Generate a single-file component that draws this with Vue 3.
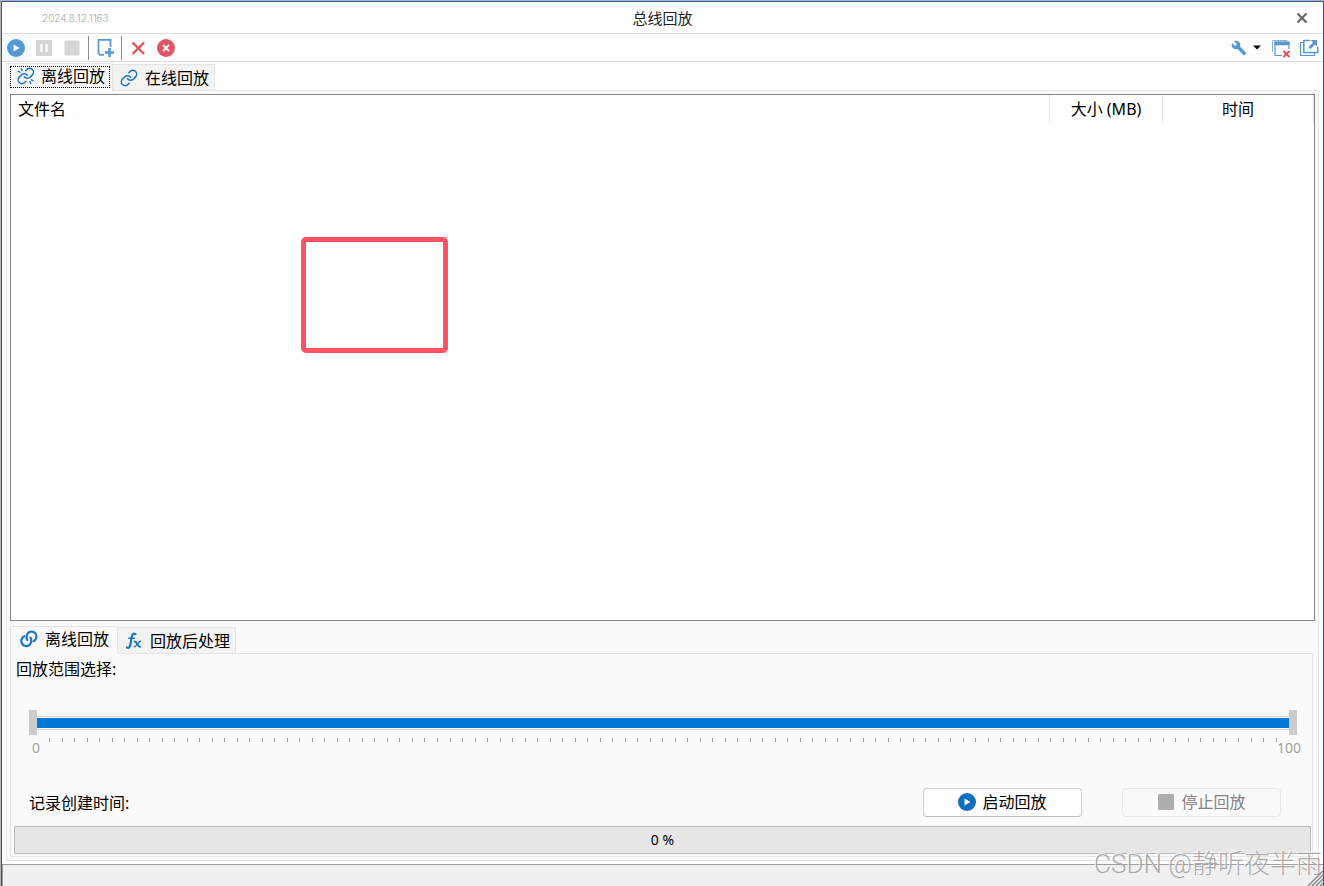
<script setup>
import { ref } from 'vue'

const mainTab = ref('offline')
const bottomTab = ref('offline')
const rangeStart = ref(0)
const rangeEnd = ref(100)
const progress = ref(0)
const files = ref([])
const running = ref(false)
</script>

<template>
  <div class="desktop">
    <div class="window">
      <header class="titlebar">
        <span class="version">2024.8.12.1163</span>
        <h1>总线回放</h1>
        <button class="close" aria-label="关闭">
          <svg width="12" height="12" viewBox="0 0 12 12">
            <path d="M1.5 1.5l9 9M10.5 1.5l-9 9" stroke="#666" stroke-width="2.2" />
          </svg>
        </button>
      </header>

      <div class="toolbar">
        <button class="tool hot" aria-label="启动">
          <svg width="20" height="20" viewBox="0 0 20 20">
            <circle cx="10" cy="10" r="9" fill="#5698d3" />
            <path d="M7.5 6.5v7l6-3.5z" fill="#fff" />
          </svg>
        </button>
        <button class="tool" aria-label="暂停">
          <svg width="20" height="20" viewBox="0 0 20 20">
            <rect x="2" y="2" width="16" height="16" fill="#d5d5d5" />
            <path d="M7.5 6v8M12.5 6v8" stroke="#fff" stroke-width="2" />
          </svg>
        </button>
        <button class="tool" aria-label="停止">
          <svg width="20" height="20" viewBox="0 0 20 20">
            <rect x="2.5" y="2.5" width="15" height="15" rx="1.5" fill="#d5d5d5" />
          </svg>
        </button>
        <span class="sep"></span>
        <button class="tool" aria-label="添加文件">
          <svg width="20" height="20" viewBox="0 0 20 20" fill="none" stroke="#5698d3">
            <path d="M9 16.8H5L3.5 15.3V1.8h12V9" stroke-width="1.8" />
            <path d="M14.5 10v9M10 14.5h9" stroke-width="2.6" />
          </svg>
        </button>
        <span class="sep"></span>
        <button class="tool" aria-label="删除">
          <svg width="20" height="20" viewBox="0 0 20 20">
            <path d="M4.5 4.5L16 16M16 4.5L4.5 16" stroke="#de5357" stroke-width="2.4" />
          </svg>
        </button>
        <button class="tool" aria-label="清空">
          <svg width="20" height="20" viewBox="0 0 20 20">
            <circle cx="10" cy="10" r="9" fill="#de5763" />
            <path d="M7 7l6 6M13 7l-6 6" stroke="#fff" stroke-width="1.8" />
          </svg>
        </button>
        <button class="tool menu" aria-label="设置">
          <svg width="16" height="16" viewBox="0 0 24 24">
            <path
              d="M22.7 19l-9.1-9.100c.9-2.300.4-5-1.500-6.900-2-2-5-2.400-7.400-1.300L9 6 6 9 1.600 4.700C.4 7.100.9 10.100 2.900 12.100c1.900 1.900 4.600 2.400 6.900 1.500l9.100 9.100c.4.4 1 .4 1.400 0l2.300-2.300c.5-.4.5-1.100.1-1.400z"
              fill="#5698d3" />
          </svg>
          <svg class="caret" width="8" height="5" viewBox="0 0 8 5">
            <path d="M0 0.5h8L4 4.5z" fill="#000" />
          </svg>
        </button>
        <button class="tool" aria-label="关闭窗口">
          <svg width="20" height="20" viewBox="0 0 20 20" fill="none">
            <path d="M1.5 14V2.500h15" stroke="#8fb0cf" />
            <path d="M11 17.500H4V4h14v7" stroke="#5698d3" stroke-width="1.200" />
            <path d="M3.500 5.500h15" stroke="#5698d3" stroke-width="3.600" />
            <path d="M12.500 13l6 6M18.500 13l-6 6" stroke="#de5357" stroke-width="2" />
          </svg>
        </button>
        <button class="tool" aria-label="弹出窗口">
          <svg width="20" height="20" viewBox="0 0 20 20" fill="none" stroke="#5698d3">
            <path d="M4 4.500H1.500v13H15.500V15" stroke-width="1.200" />
            <path d="M11 2.500H4.800v12h14V9" stroke-width="1.500" />
            <path d="M10.500 10l5-5" stroke-width="3" />
            <path d="M11.500 2h6.500v6.500z" fill="#5698d3" stroke="none" />
          </svg>
        </button>
      </div>

      <main class="main">
        <div class="tabs" role="tablist">
          <button class="tab" :class="{ active: mainTab === 'offline' }" role="tab" @click="mainTab = 'offline'">
            <span class="tab-inner dotted">
              <svg width="20" height="20" viewBox="-2 -1 26 26" fill="none" stroke="#1a76c6" stroke-width="2" stroke-linecap="round">
                <path d="M10 13a5 5 0 0 0 7.540.54l3-3a5 5 0 0 0-7.070-7.070l-1.720 1.710" />
                <path d="M14 11a5 5 0 0 0-7.540-.54l-3 3a5 5 0 0 0 7.070 7.070l1.710-1.710" />
                <path d="M2.500 6l2 1M6 2.500l1 2M17.500 19.500l1 2M19.500 17l2 1" />
              </svg>
              离线回放
            </span>
          </button>
          <button class="tab" :class="{ active: mainTab === 'online' }" role="tab" @click="mainTab = 'online'">
            <span class="tab-inner">
              <svg width="20" height="20" viewBox="-1 -1 26 26" fill="none" stroke="#1a76c6" stroke-width="2" stroke-linecap="round">
                <path d="M10 13a5 5 0 0 0 7.540.54l3-3a5 5 0 0 0-7.070-7.070l-1.720 1.710" />
                <path d="M14 11a5 5 0 0 0-7.540-.54l-3 3a5 5 0 0 0 7.070 7.070l1.710-1.710" />
              </svg>
              在线回放
            </span>
          </button>
        </div>

        <div class="page">
          <div class="file-list">
            <table>
              <colgroup>
                <col />
                <col class="col-size" />
                <col class="col-time" />
              </colgroup>
              <thead>
                <tr>
                  <th class="name">文件名</th>
                  <th>大小 (MB)</th>
                  <th>时间</th>
                </tr>
              </thead>
              <tbody>
                <tr v-for="file in files" :key="file.name">
                  <td>{{ file.name }}</td>
                  <td>{{ file.size }}</td>
                  <td>{{ file.time }}</td>
                </tr>
              </tbody>
            </table>
            <div class="marker"></div>
          </div>

          <div class="tabs lower" role="tablist">
            <button class="tab" :class="{ active: bottomTab === 'offline' }" role="tab" @click="bottomTab = 'offline'">
              <span class="tab-inner">
                <svg width="20" height="20" viewBox="0 0 20 20" fill="none" stroke="#1a76c6" stroke-width="2.2" stroke-linecap="round">
                  <path d="M8.200 11C6.800 8.500 7.500 4.500 10.300 3a5 5 0 1 1 4.200 9.200" />
                  <path d="M5.300 7.200a5 5 0 1 0 4.200 9.400c2.800-1.500 3.500-5.500 2.100-8" />
                </svg>
                离线回放
              </span>
            </button>
            <button class="tab" :class="{ active: bottomTab === 'post' }" role="tab" @click="bottomTab = 'post'">
              <span class="tab-inner">
                <svg width="20" height="20" viewBox="0 0 20 20" fill="none" stroke="#1a76c6" stroke-linecap="round">
                  <path d="M11.500 3.200c-2-1.200-3.200 0-3.700 2.600l-1.500 8c-.5 2.600-1.600 3.600-3.400 2.700" stroke-width="2.200" />
                  <path d="M4.800 7.300h5.600" stroke-width="1.600" />
                  <path d="M10.500 10.500c2.500-1 2.600 5.500 5.500 5.300" stroke-width="2" />
                  <path d="M16.500 10.300c-2 0-4 5.600-6.300 5.500" stroke-width="1.400" />
                </svg>
                回放后处理
              </span>
            </button>
          </div>

          <section class="panel">
            <div class="caption">回放范围选择:</div>
            <div class="slider">
              <div class="track"></div>
              <input v-model="rangeStart" type="range" min="0" max="100" aria-label="回放起点" />
              <input v-model="rangeEnd" type="range" min="0" max="100" aria-label="回放终点" />
            </div>
            <div class="ticks">
              <i v-for="n in 99" :key="n"></i>
            </div>
            <div class="scale">
              <span>{{ rangeStart }}</span>
              <span>{{ rangeEnd }}</span>
            </div>

            <div class="actions">
              <span class="created">记录创建时间:</span>
              <button class="action" :disabled="running" @click="running = true">
                <svg width="18" height="18" viewBox="0 0 18 18">
                  <circle cx="9" cy="9" r="9" fill="#106ebe" />
                  <path d="M6.500 5.500v7l6-3.500z" fill="#fff" />
                </svg>
                启动回放
              </button>
              <button class="action" :disabled="!running" @click="running = false">
                <svg width="18" height="18" viewBox="0 0 18 18">
                  <rect x="1" y="1" width="16" height="16" rx="1.500" fill="#adadad" />
                </svg>
                停止回放
              </button>
            </div>

            <div class="progress">
              <progress :value="progress" max="100" aria-label="回放进度"></progress>
              <span>{{ progress }} %</span>
            </div>
          </section>
        </div>
      </main>

      <footer class="statusbar">
        <svg width="16" height="16" viewBox="0 0 16 16">
          <path d="M1 16L16 1M5 16L16 5M9 16l7-7M13 16l3-3" stroke="#8c8c8c" stroke-width="1.500" />
        </svg>
      </footer>
      <div class="watermark">CSDN @静听夜半雨</div>
    </div>
  </div>
</template>

<style>
body {
  background: #b4b4b4;
}
</style>

<style scoped>
.desktop {
  box-sizing: border-box;
  height: 100vh;
  padding: 1px 0 0 1px;
  font-family: "Noto Sans", "Noto Sans CJK SC", sans-serif;
  font-size: 16px;
  line-height: 22px;
  color: #000;
}

.window {
  position: relative;
  box-sizing: border-box;
  height: 100%;
  display: flex;
  flex-direction: column;
  overflow: hidden;
  background: #fff;
  border: 1px solid #2b5797;
  border-bottom: none;
}

button {
  font: inherit;
  color: inherit;
  padding: 0;
  border: none;
  background: none;
}

svg {
  display: block;
  flex: none;
}

.titlebar {
  display: grid;
  grid-template-columns: 1fr auto 1fr;
  align-items: center;
  height: 31px;
  border-bottom: 1px solid #dcdcdc;
}

.titlebar h1 {
  margin: 0;
  font-size: 15px;
  font-weight: 400;
  color: #222;
}

.version {
  margin-left: 40px;
  font-family: Inter, sans-serif;
  font-size: 10px;
  font-weight: 300;
  color: #aaa;
}

.close {
  justify-self: end;
  margin-right: 15px;
}

.toolbar {
  display: flex;
  align-items: center;
  height: 27px;
  border-bottom: 1px solid #dcdcdc;
}

.tool {
  display: flex;
  align-items: center;
  justify-content: center;
  width: 28px;
  height: 26px;
}

.tool.hot {
  background: #f5faff;
}

.tool.menu {
  width: 38px;
  margin-left: auto;
  margin-right: 2px;
}

.caret {
  margin-left: 6px;
}

.sep {
  width: 1px;
  height: 24px;
  margin: 0 2px;
  background: #8c8c8c;
}

.main {
  flex: 1;
  min-height: 0;
  display: flex;
  flex-direction: column;
  padding: 1px 4px 3px;
}

.tabs {
  display: flex;
  align-items: flex-end;
  height: 27px;
  position: relative;
}

.tab {
  height: 26px;
  padding: 0 4px;
  background: #f3f3f3;
  border: 1px solid #e5e5e5;
  border-bottom: none;
  border-left: none;
}

.tab.active {
  height: 28px;
  margin-bottom: -1px;
  padding: 0 2px 1px 3px;
  background: #fafafa;
  border-left: 1px solid #e5e5e5;
}

.tab-inner {
  box-sizing: border-box;
  display: flex;
  align-items: center;
  gap: 6px;
  height: 22px;
  padding: 0 1px 0 2px;
  white-space: nowrap;
}

.tab-inner.dotted {
  padding: 0 4px 2px;
  border: 1px dotted #000;
}

.page {
  flex: 1;
  min-height: 0;
  display: flex;
  flex-direction: column;
  padding: 3px;
  background: #fafafa;
  border: 1px solid #e5e5e5;
}

.file-list {
  position: relative;
  flex: 1;
  min-height: 120px;
  background: #fff;
  border: 1px solid #828790;
}

.file-list table {
  width: 100%;
  table-layout: fixed;
  border-collapse: collapse;
}

.col-size {
  width: 113px;
}

.col-time {
  width: 151px;
}

th {
  height: 28px;
  padding: 0;
  font-weight: 400;
  border-right: 1px solid #e5e5e5;
}

th.name {
  padding-left: 7px;
  text-align: left;
}

.marker {
  position: absolute;
  left: 290px;
  top: 142px;
  width: 137px;
  height: 106px;
  border: 5px solid #ff5364;
  border-radius: 5px;
}

.lower {
  height: 28px;
  margin-top: 4px;
}

.lower .tab.active .tab-inner {
  padding: 0 6px 2px 5px;
}

.panel {
  padding: 4px 0 2px;
  border: 1px solid #e5e5e5;
  margin-right: 2px;
}

.caption {
  margin-left: 5px;
}

.slider {
  position: relative;
  height: 25px;
  margin: 30px 15px 0 18px;
}

.track {
  position: absolute;
  left: 8px;
  right: 8px;
  top: 6px;
  height: 10px;
  padding: 1px 0;
  border: 1px solid #d6d6d6;
  border-width: 1px 0;
  background: #0078d7 content-box;
}

.slider input {
  position: absolute;
  left: 0;
  top: 0;
  width: 100%;
  height: 25px;
  margin: 0;
  appearance: none;
  background: none;
  pointer-events: none;
}

.slider input::-webkit-slider-thumb {
  appearance: none;
  width: 8px;
  height: 25px;
  border: none;
  border-radius: 0;
  background: #ccc;
  pointer-events: auto;
}

.ticks {
  display: flex;
  justify-content: space-between;
  margin: 3px 35px 0 38px;
}

.ticks i {
  width: 1px;
  height: 4px;
  background: #a0a0a0;
}

.scale {
  display: flex;
  justify-content: space-between;
  margin: 0 11px 0 21px;
  font-size: 14px;
  line-height: 12px;
  color: #a0a0a0;
}

.actions {
  display: flex;
  align-items: center;
  gap: 40px;
  margin: 34px 31px 9px 18px;
}

.created {
  flex: 1;
}

.action {
  display: flex;
  align-items: center;
  justify-content: center;
  gap: 6px;
  width: 159px;
  height: 29px;
  padding-bottom: 1px;
  background: #fefefe;
  border: 1px solid #d0d0d0;
  border-bottom-color: #bcbcbc;
  border-radius: 4px;
}

.action:disabled {
  color: #838383;
  background: #fafafa;
  border-color: #e8e8e8;
}

.progress {
  display: grid;
  height: 28px;
  margin: 0 1px 0 3px;
}

.progress > * {
  grid-area: 1 / 1;
}

.progress span {
  place-self: center;
  font-size: 14px;
}

progress {
  box-sizing: border-box;
  width: 100%;
  height: 28px;
  appearance: none;
  border: 1px solid #bcbcbc;
  background: #e6e6e6;
}

progress::-webkit-progress-bar {
  background: #e6e6e6;
}

progress::-webkit-progress-value {
  background: #06b025;
}

.statusbar {
  display: flex;
  align-items: flex-end;
  justify-content: flex-end;
  height: 21px;
  background: #f0f0f0;
  border-top: 1px solid #a0a0a0;
  border-left: 1px solid #a0a0a0;
}

.watermark {
  position: absolute;
  right: 1px;
  bottom: 6px;
  font-family: Roboto, "Noto Sans CJK SC", sans-serif;
  font-size: 26px;
  font-weight: 300;
  line-height: 32px;
  color: rgba(160, 160, 160, 0.9);
  text-shadow: -1px -1px 0 rgba(255, 255, 255, 0.8);
  pointer-events: none;
}
</style>
